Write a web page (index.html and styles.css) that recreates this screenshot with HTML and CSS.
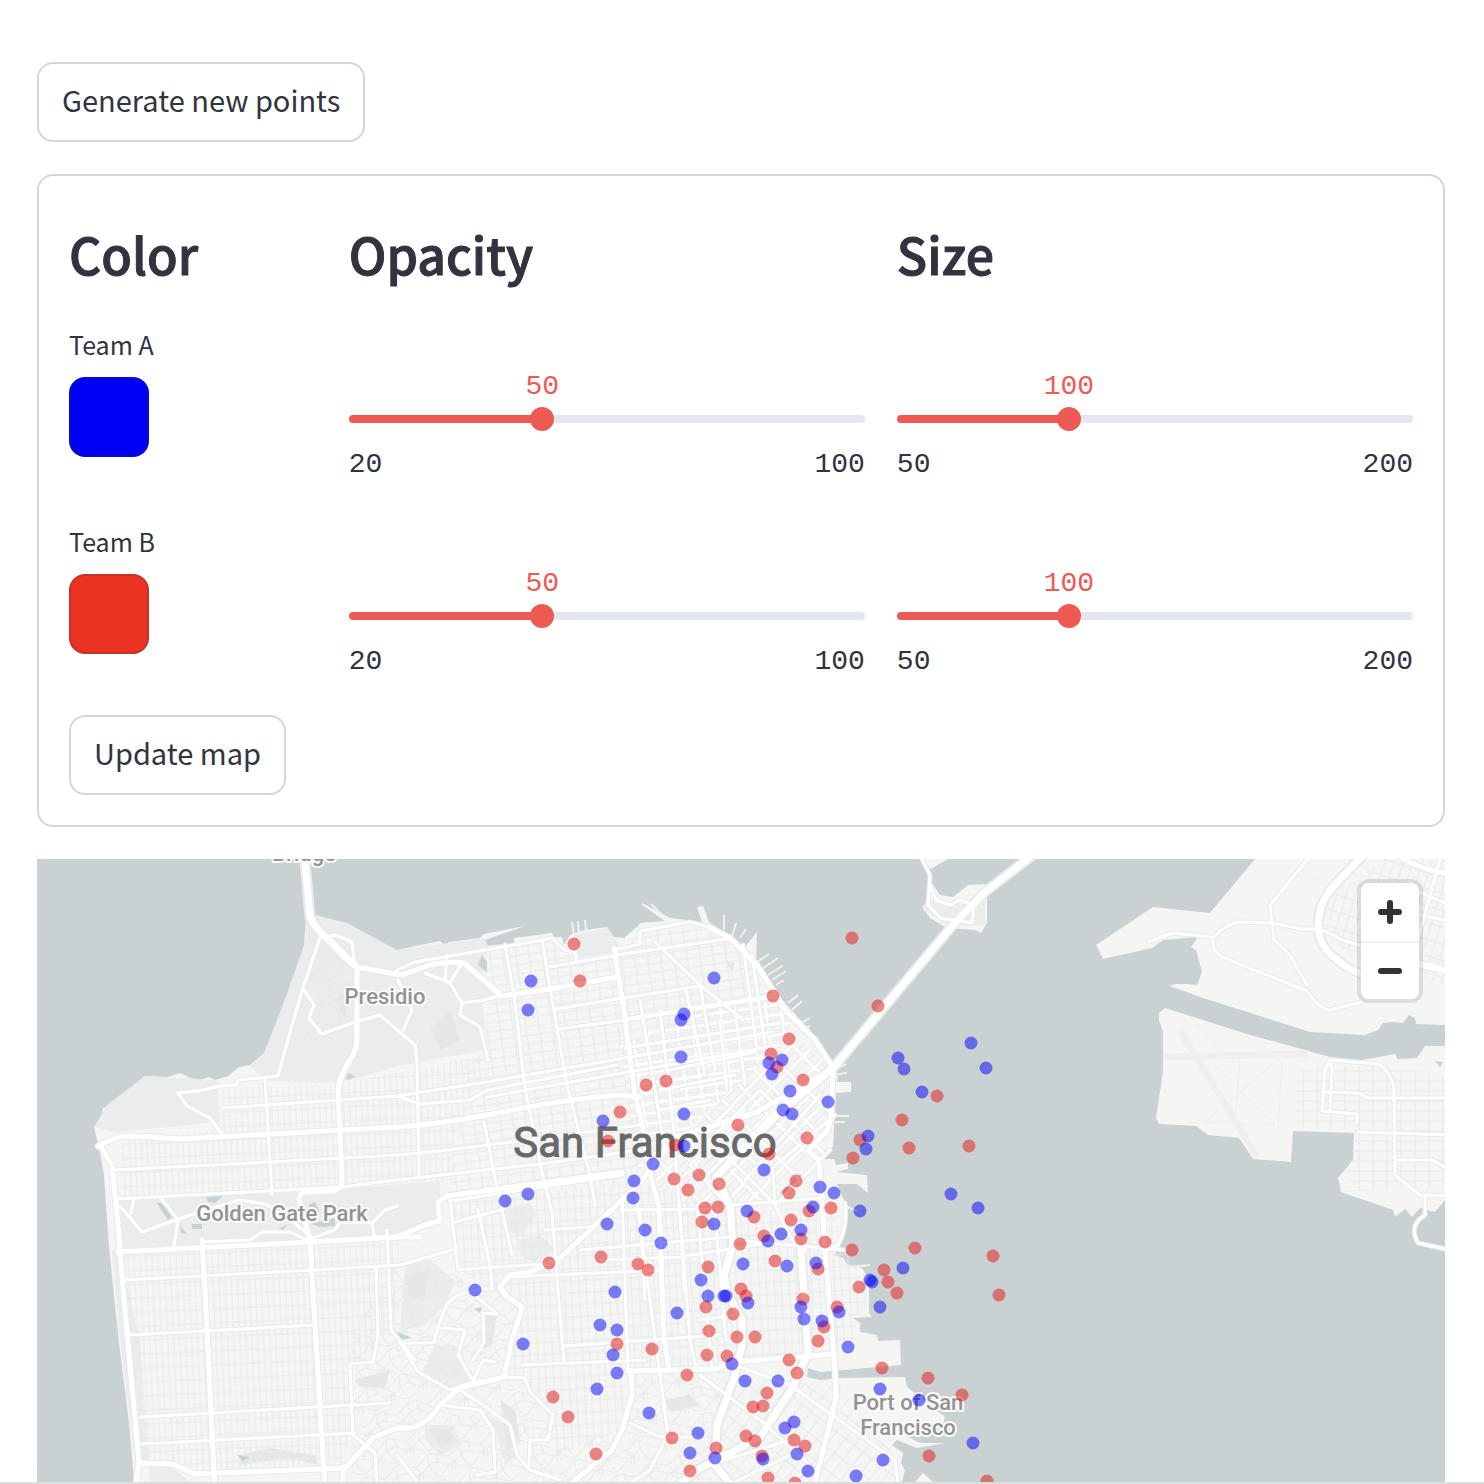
FILE: index.html
```html
<!DOCTYPE html>
<html lang="en">
<head>
<meta charset="utf-8">
<meta name="viewport" content="width=device-width, initial-scale=1">
<title>Team map</title>
<link rel="stylesheet" href="styles.css">
</head>
<body>
<main class="page">
  <button class="btn" type="button">Generate new points</button>

  <form class="panel">
    <div class="columns">
      <h3>Color</h3>
      <h3>Opacity</h3>
      <h3>Size</h3>
    </div>
    <div class="columns team">
      <div class="picker">
        <label for="color-a">Team A</label>
        <input id="color-a" type="color" value="#0000f5">
      </div>
      <div class="slider" style="--pos:37.5%">
        <output for="opacity-a">50</output>
        <div class="track"><input id="opacity-a" type="range" min="20" max="100" value="50" aria-label="Team A opacity"></div>
        <div class="limits"><span>20</span><span>100</span></div>
      </div>
      <div class="slider" style="--pos:33.33%">
        <output for="size-a">100</output>
        <div class="track"><input id="size-a" type="range" min="50" max="200" value="100" aria-label="Team A size"></div>
        <div class="limits"><span>50</span><span>200</span></div>
      </div>
    </div>
    <div class="columns team">
      <div class="picker">
        <label for="color-b">Team B</label>
        <input id="color-b" type="color" value="#ea3323">
      </div>
      <div class="slider" style="--pos:37.5%">
        <output for="opacity-b">50</output>
        <div class="track"><input id="opacity-b" type="range" min="20" max="100" value="50" aria-label="Team B opacity"></div>
        <div class="limits"><span>20</span><span>100</span></div>
      </div>
      <div class="slider" style="--pos:33.33%">
        <output for="size-b">100</output>
        <div class="track"><input id="size-b" type="range" min="50" max="200" value="100" aria-label="Team B size"></div>
        <div class="limits"><span>50</span><span>200</span></div>
      </div>
    </div>
    <button class="btn" type="button">Update map</button>
  </form>

  <section class="map" aria-label="Map of San Francisco">
    <svg class="canvas" viewBox="37 859 1408 623" preserveAspectRatio="xMinYMin slice">
      <defs>
        <pattern id="west" class="grid" width="6" height="14" patternUnits="userSpaceOnUse" patternTransform="rotate(-2.5)"><path d="M0 1H6M1 0V14"/></pattern>
        <pattern id="north" class="grid" width="13" height="9" patternUnits="userSpaceOnUse" patternTransform="rotate(-8)"><path d="M0 1H13M1 0V9"/></pattern>
        <pattern id="core" class="grid" width="15" height="10" patternUnits="userSpaceOnUse" patternTransform="rotate(-8)"><path class="outline" d="M0 3H15M3 0V10"/><path class="lit" d="M0 3H15M3 0V10"/><path d="M3 8H15"/></pattern>
        <pattern id="mission" class="grid" width="15" height="12" patternUnits="userSpaceOnUse" patternTransform="rotate(-3)"><path d="M0 1H15M1 0V12M8 0V12"/></pattern>
        <pattern id="soma" class="grid" width="16" height="22" patternUnits="userSpaceOnUse" patternTransform="rotate(45)"><path class="outline" d="M0 3H16M3 0V22"/><path class="lit" d="M0 3H16M3 0V22"/><path d="M10 4V22"/></pattern>
        <pattern id="bay" class="grid" width="11" height="18" patternUnits="userSpaceOnUse" patternTransform="rotate(38)"><path d="M0 1H11M1 0V18"/></pattern>
        <pattern id="hills" class="grid" width="34" height="28" patternUnits="userSpaceOnUse" patternTransform="rotate(-20)"><path d="M0 5Q9-3 17 5T34 5M0 14Q9 7 17 14T34 14M0 22Q9 30 17 22T34 22M6 3Q1 12 8 24M23 8Q30 14 24 23M14 2V13M30 14L28 24"/></pattern>
        <pattern id="oak" class="grid" width="9" height="16" patternUnits="userSpaceOnUse" patternTransform="rotate(17)"><path d="M0 1H9M1 0V16"/></pattern>
        <pattern id="alameda" class="grid" width="14" height="10" patternUnits="userSpaceOnUse"><path d="M0 1H14M1 0V10"/></pattern>
        <g id="wide">
          <path d="M304 850L310 917Q316 930 329 940Q345 957 357 967"/>
          <path d="M1034 854L985 892L953 925L833 1068L780 1112L716 1177L730 1205L733 1245L724 1275L727 1292L742 1320L742 1345L735 1375L717 1425L715 1465L735 1490"/>
          <path d="M1368 850L1332 888Q1318 905 1318 928Q1320 948 1335 958Q1350 972 1370 976"/>
          <path d="M801 1250L808 1353L793 1387L760 1437L730 1453L697 1470L672 1490"/>
        </g>
        <g id="main">
          <path d="M357 967L402 975L430 965Q447 961 464 963L502 996L550 989L617 977"/>
          <path d="M709 927L730 938L757 965L785 1010L815 1040L833 1068L831 1115Q829 1132 822 1136L808 1150L819 1161L825 1250L835 1370L836 1397L830 1423L813 1490"/>
          <path d="M614 948L624 1012L635 1095L643 1128L649 1170L659 1207L664 1337L669 1370"/>
          <path d="M357 967V1040Q356 1052 350 1060Q340 1075 338 1090L342 1180Q342 1189 332 1191L308 1192Q298 1193 299 1200L310 1240L325 1490"/>
          <path d="M100 1145L112 1165L118 1225L124 1300L139 1462L135 1490"/>
          <path d="M98 1146L121 1136Q150 1136 180 1139L397 1127Q440 1124 487 1115Q560 1100 617 1095L640 1097"/>
          <path d="M118 1252L310 1242L397 1237L420 1237"/>
          <path d="M834 1068L757 1112L674 1138L640 1183L622 1200L560 1258L530 1272L510 1275L500 1287L506 1296L522 1307L512 1340L504 1377L460 1388L440 1405Q427 1425 410 1428L397 1428L374 1437L345 1468L195 1474L172 1464L139 1463"/>
          <path d="M628 1371L715 1369L734 1362L835 1354"/>
          <path d="M631 1371L632 1395L622 1430L612 1450L573 1482"/>
          <path d="M1393 850Q1410 868 1450 874M1420 965L1450 972"/>
          <path d="M202 1240L205 1290L215 1490M344 1466L342 1490"/>
          <path d="M397 1237L425 1225L440 1221L438 1203L447 1196L622 1172"/>
        </g>
        <g id="street">
          <path d="M450 1201L622 1175M617 955L727 939M397 970L415 962L445 957L543 940L552 938L564 950L575 952L577 963M614 950L640 944L640 931L690 922L709 927M624 1019L775 995"/>
          <path d="M505 945L514 995L525 1088L542 1172L552 1213L559 1303L564 1363M542 940L550 988L567 1085L590 1175L595 1205"/>
          <path d="M622 1195L628 1370M636 1195L668 1435L650 1470L620 1490M620 1210L708 1209L715 1214"/>
          <path d="M550 967L617 955M556 1009L617 999L700 986M559 1029L625 1020L775 997M655 942L700 985L743 1020"/>
          <path d="M223 1108L397 1096L420 1104L470 1100L488 1090L617 1065M397 1096L487 1082L625 1058L772 1032M487 1097L640 1070L780 1045M625 1048L780 1023"/>
          <path d="M113 1170L270 1162L397 1155L440 1151L545 1138L640 1125M116 1199L342 1187L397 1180L540 1164L640 1150"/>
          <path d="M265 1080L272 1195M417 1062L419 1175M484 1122L495 1178L512 1255"/>
          <path d="M125 1280L315 1270L400 1265L452 1250M130 1335L315 1325M140 1417L390 1403M142 1444L355 1433M387 1230L391 1330L415 1360M376 1268L378 1335L373 1362L350 1364L353 1435L375 1453L377 1482"/>
          <path d="M223 1135L210 1118L187 1106L178 1093L198 1091L220 1086L237 1085L238 1080L278 1076L292 1025L303 988L320 938L335 935L352 942L354 962M303 988L314 1005L309 1018L322 1034L355 1022L380 1015L397 1030L415 1045L417 1062"/>
          <path d="M398 980L412 1010L403 1030M425 973L450 983L462 1003L460 1015L480 1027L488 1060M462 1003L484 1000L502 995M450 983L462 963M445 980L447 955"/>
          <path d="M120 1206L142 1232L190 1215L240 1200L265 1204L290 1220L310 1235M160 1197L178 1220L174 1245M202 1242L250 1240L262 1232L290 1232L307 1240L335 1230L340 1222L372 1223L385 1210L397 1206M372 1223L374 1235M134 1198L131 1213"/>
          <path d="M450 1200L458 1270L480 1268L560 1263M478 1210L490 1265L492 1290M455 1222L500 1210M545 1230L590 1227"/>
          <path d="M510 1277L660 1270M580 1250L730 1237L733 1240M600 1260L680 1257L760 1244M564 1346L720 1335M522 1365L645 1360"/>
          <path d="M674 1140L690 1340L696 1368M697 1205L712 1368M715 1215L726 1340M640 1210L645 1300M680 1210L684 1290"/>
          <path d="M491 1288Q460 1290 448 1303Q437 1325 434 1343L400 1343M397 1337L418 1372L450 1390L480 1380M460 1390L490 1410L510 1425L517 1455L530 1470L560 1480M439 1328L465 1330L458 1355L473 1381L483 1360L495 1362M477 1297L497 1314L483 1313L484 1342L473 1360"/>
          <path d="M505 1377L525 1378L530 1392L553 1415L548 1440L530 1440L529 1465M397 1455L417 1482M440 1405L480 1410L493 1430L495 1472L477 1475"/>
          <path d="M700 1375L760 1420L815 1470M790 1385L895 1460L898 1482M733 1240L845 1250M735 1365L790 1385M715 1463L790 1440M735 1482L790 1455M630 1423L660 1437L700 1437M700 1320L735 1315"/>
          <path d="M730 1205L825 1198M770 1170L835 1115M700 1150L760 1090M720 1170L795 1090M745 1180L820 1095M690 1165L745 1110M775 1205L830 1150M690 1165L733 1210M712 1140L775 1205M735 1115L800 1180M760 1090L825 1155M780 1065L833 1115"/>
          <path d="M686 990L705 1075M700 985L715 1070M720 1020L727 1090M743 945L757 1050M752 955L765 1045M735 1010L745 1085M660 1010L675 1140M640 1000L665 1150M780 1055L700 1140M773 1170L775 1205L792 1240L805 1250M845 1203Q848 1228 838 1245L825 1252M660 1090L735 1075M660 1110L710 1100M670 1070L755 1052"/>
          <path d="M1149 942L1172 933L1212 937L1214 950L1222 957L1307 991Q1320 1010 1330 1010L1362 1002M1214 937Q1225 925 1238 922L1272 923L1302 929L1320 929L1345 941L1450 970M1308 859L1270 905L1274 940L1290 955L1307 985M1440 859L1415 950M1405 886L1445 903M1420 915L1445 920"/>
          <path d="M1330 1060L1325 1070L1322 1111L1357 1114L1357 1123M1330 1060L1332 1070L1330 1110M1330 1060L1378 1064Q1392 1072 1394 1090L1395 1175L1420 1195L1450 1196M1322 1092L1358 1093L1368 1098L1450 1098M1358 1132L1450 1135M1396 1160L1432 1160L1450 1170M1425 1195V1215Q1408 1225 1418 1243L1450 1250"/>
          <path d="M920 855L930 875L928 905L940 918L972 923L974 905L960 900L950 905L936 900L930 885"/>
        </g>
      </defs>

      <rect class="water" x="37" y="859" width="1408" height="800"/>

      <g class="land">
        <path d="M135 1490L129 1423L119 1343L109 1247L104 1175L99 1148L94 1127L100 1122L103 1108L112 1105L115 1101L122 1101L136 1085L145 1076L168 1077L180 1073L197 1081L209 1077L215 1080L228 1076L239 1067L250 1065L264 1053L272 1038L284 1002L294 982L304 945L306 920L315 915L324 920L347 923L362 937L397 950L440 941L445 945L449 942L480 938L484 934L525 926L485 940L484 946L514 943L514 938L552 933L554 937L562 937L564 945L570 935L585 930L607 927L614 937L624 938L639 925L640 923L665 921L642 905L642 903L670 918L687 920L702 922L697 907L703 906L709 922L727 935L745 947L757 932L756 962L785 1003L810 1030L833 1065L838 1075L837 1082L851 1082L851 1092L836 1093L833 1147L822 1152L825 1159L834 1159L836 1165L848 1163L848 1169L836 1172L867 1175L868 1193L857 1184L837 1184L845 1203L847 1220L843 1240L835 1255L843 1258L848 1265L862 1268L869 1280L869 1313L872 1317L853 1318L860 1323L860 1332L877 1335L878 1341L900 1340L901 1365L820 1372L808 1368L807 1377L820 1380L840 1378L905 1377L907 1387L945 1417L943 1424L904 1435L920 1443L945 1443L917 1448L897 1440L892 1445L903 1453L901 1463L905 1470L900 1490Z"/>
        <path d="M932 883L940 895L953 897L968 885L987 884L987 923L981 933L975 930L947 928L930 918L922 907L927 902ZM920 859H948L931 869ZM915 1482L923 1473L933 1482Z"/>
        <path d="M1255 859L1210 913L1153 907L1096 945L1103 959L1152 948L1163 940L1198 937L1191 947L1196 950L1202 972L1197 985L1186 984L1176 984L1169 986L1187 992L1197 996L1310 1032L1365 1035L1378 1030L1383 1023L1393 1022L1403 1023L1409 1015L1415 1018L1416 1024L1445 1025V859Z"/>
        <path d="M1165 1008L1159 1013V1020L1163 1032L1163 1072L1156 1118L1159 1124L1196 1126L1208 1135L1239 1138L1253 1159L1291 1162L1293 1131L1354 1133L1353 1160L1338 1178L1341 1192L1393 1210L1395 1217L1405 1209L1412 1217L1420 1208L1435 1212L1445 1200V1046H1425L1417 1058L1398 1059L1395 1054L1362 1060L1330 1057L1247 1034Z"/>
      </g>
      <path class="pier" d="M757 962l12-8M762 969l16-11M768 975l14-9M772 980l14-9M776 985l8-5M788 1003l10-8M792 1010l10-9M801 1023l9-5M806 1028l4-2M724 930V915M732 936l4-13M740 938l6-9M574 935l-2-13M579 933l-1-12M586 930l-1-10M838 1068l8-4M838 1074l9-1M835 1116h14M835 1122h10M843 1205l14 6M850 1267l20-2M651 904l14 14"/>

      <path class="park" d="M264 1081L250 1065L264 1053L284 1002L304 945L306 920L315 915L347 923L397 950L484 938L488 946L482 975L500 995L483 1000L485 1050L397 1066L340 1083Z"/>
      <path class="park" d="M94 1127L107 1105L145 1076L217 1080L220 1122L115 1132ZM117 1200L342 1189L440 1181V1220L400 1235L118 1250ZM120 1340L138 1482H150L140 1340L118 1250H112ZM142 1466L170 1466L190 1482H137Z"/>
      <path class="park" d="M574 935L607 928L619 945L614 952L580 958ZM508 1208L530 1203L536 1215L522 1235L508 1232ZM518 1240L540 1235L555 1250L535 1262L520 1255ZM405 1265L430 1260L455 1280L445 1305L425 1325L400 1330ZM435 1345L455 1345L470 1380L450 1388L420 1377ZM480 1410L505 1425L517 1455L505 1465L495 1430ZM425 1425L455 1425L460 1445L440 1455L425 1440ZM922 907L930 900L960 905L985 890V925L947 926Z"/>
      <path class="shade" d="M335 1000L350 980L345 1020ZM430 1030L450 1010L460 1040L440 1050ZM405 1275L430 1270L425 1295L410 1300ZM485 1315L498 1310L492 1345L480 1350ZM500 1400L515 1410L520 1440L508 1450ZM430 1430L450 1430L455 1440L440 1448ZM240 1455L270 1448L315 1455L318 1465L290 1458L240 1465ZM355 1380L390 1370L385 1388L360 1387ZM725 960L735 963L732 972ZM665 1400L690 1395L700 1405L670 1412Z"/>

      <g class="blocks">
        <path fill="url(#west)" d="M122 1142L220 1129L223 1088L340 1085L345 1083L480 1056L447 1181L120 1198Z"/>
        <path fill="url(#west)" d="M122 1254L400 1240L395 1330L352 1370L353 1430L340 1468L200 1474L142 1462Z"/>
        <path fill="url(#north)" d="M485 1050L487 1000L470 965L490 948L548 940L565 955L615 950L640 932L695 926L730 942L757 968L775 1000L625 1035L640 1185L447 1200L470 1065Z"/>
        <path fill="url(#core)" d="M700 1010L778 996L792 1025L755 1070L640 1170L620 1045Z"/>
        <path fill="url(#mission)" d="M450 1204L640 1180L740 1215L835 1200L840 1245L868 1280L866 1310L850 1318L860 1335L830 1355L735 1362L640 1369L625 1430L555 1455L545 1400L508 1372L522 1308L460 1270Z"/>
        <path fill="url(#soma)" d="M640 1180L757 1067L790 1030L830 1070L832 1130L770 1200L715 1212Z"/>
        <path fill="url(#hills)" d="M350 1335L400 1260L455 1275L500 1295L520 1310L505 1370L548 1400L550 1450L625 1430L635 1375L735 1370L712 1430V1482H350L355 1380Z"/>
        <path fill="url(#bay)" d="M737 1372L795 1385L835 1382L890 1450L898 1482H735L718 1440Z"/>
        <path fill="url(#hills)" d="M310 930L345 935L345 1015L330 1040L305 1040L318 1000L305 985Z"/>
        <path fill="url(#oak)" d="M1385 859H1445V985L1345 950L1322 935L1330 900Z"/>
        <path fill="url(#alameda)" d="M1295 1068L1330 1066L1380 1066L1445 1075V1190L1420 1188L1345 1192L1355 1130L1295 1128Z"/>
      </g>
      <path class="runway" d="M1164 1057L1308 1054M1180 1030L1258 1158"/>
      <path class="lane" d="M1195 1022L1222 1050M1240 1060L1236 1115M1280 1058L1205 1122L1275 1125L1215 1065M1282 1060L1278 1130M1300 875L1322 878"/>
      <path class="pond" d="M206 1197L223 1196L215 1203L208 1202ZM156 1202L163 1204L172 1217L168 1220ZM180 1226L187 1234L181 1233ZM192 1224H202V1229H192ZM278 1229L288 1224L283 1230ZM308 1205L315 1202L320 1212L312 1211ZM311 1224L335 1218V1226L320 1227ZM237 1455L250 1457L243 1461ZM482 955L487 962V973L478 965ZM348 1073L356 1077L346 1080ZM397 1332L412 1338L400 1340ZM474 1309L482 1307L480 1313ZM780 1192L800 1174L803 1177L782 1199ZM1435 1061L1443 1062L1440 1067Z"/>

      <g class="casing">
        <use href="#street" class="w-street"/><use href="#main" class="w-main"/><use href="#wide" class="w-wide"/>
      </g>
      <g class="road">
        <use href="#street" class="w-street"/><use href="#main" class="w-main"/><use href="#wide" class="w-wide"/>
      </g>

      <g class="place">
        <text x="304" y="861">Bridge</text>
        <text x="385" y="1004">Presidio</text>
        <text x="282" y="1221">Golden Gate Park</text>
        <text x="908" y="1410">Port of San</text>
        <text x="908" y="1435">Francisco</text>
      </g>
      <text class="city" x="645" y="1157">San Francisco</text>
      <g id="points"></g>
    </svg>
    <div class="zoom">
      <button type="button" aria-label="Zoom in"><svg viewBox="0 0 24 24"><path d="M12 3V21M3 12H21"/></svg></button>
      <button type="button" aria-label="Zoom out"><svg viewBox="0 0 24 24"><path d="M3 12H21"/></svg></button>
    </div>
  </section>
</main>
<script src="points.js"></script>
</body>
</html>
```
FILE: styles.css
```css
* { box-sizing: border-box; }

body {
  margin: 0;
  background: #fff;
  color: #31333f;
  font-family: "Noto Sans CJK JP", "Noto Sans", sans-serif;
}

.page {
  display: flex;
  flex-direction: column;
  align-items: flex-start;
  gap: 32px;
  height: 100vh;
  min-height: 1200px;
  padding: 62px 39px 0 37px;
  border-bottom: 2px solid #dcdddd;
}

.btn {
  height: 80px;
  padding: 0 23px 6px;
  border: 2px solid #d6d6d8;
  border-radius: 16px;
  background: #fff;
  color: inherit;
  font: inherit;
  font-size: 29px;
  line-height: 40px;
}

.panel {
  width: 100%;
  padding: 45px 30px 30px;
  border: 2px solid #d6d6d8;
  border-radius: 16px;
}

.columns {
  display: grid;
  grid-template-columns: 12fr 25fr 25fr;
  column-gap: 32px;
}

h3 {
  margin: 0;
  font-size: 50px;
  font-weight: 500;
  line-height: 64px;
  -webkit-text-stroke: 1px #31333f;
}

.team { margin-top: 45px; }
.team + .team { margin-top: 46px; }
.panel .btn { margin-top: 37px; }

.picker {
  display: flex;
  flex-direction: column;
  gap: 19px;
}

.picker label {
  font-size: 25px;
  line-height: 28px;
}

input[type="color"] {
  width: 80px;
  height: 80px;
  padding: 0;
  border: 0;
  background: none;
}
input[type="color"]::-webkit-color-swatch-wrapper { padding: 0; }
input[type="color"]::-webkit-color-swatch {
  border: 2px solid rgba(49, 51, 63, 0.2);
  border-radius: 16px;
}

.slider {
  padding-top: 41px;
  font-family: "Liberation Mono", monospace;
  font-size: 28px;
  line-height: 32px;
}

.slider output {
  display: block;
  width: 80px;
  margin-left: calc(var(--pos) - 40px);
  color: #ec5a53;
  text-align: center;
}

.track {
  display: flex;
  align-items: center;
  height: 8px;
  margin: 12px 0 26px;
  border-radius: 4px;
  background: linear-gradient(90deg, #ec5a53 var(--pos), #e4e7ef var(--pos));
}

input[type="range"] {
  flex: 1;
  height: 24px;
  margin: 0 -12px;
  background: none;
  appearance: none;
}
input[type="range"]::-webkit-slider-thumb {
  width: 24px;
  height: 24px;
  border-radius: 50%;
  background: #ec5a53;
  appearance: none;
}

.limits {
  display: flex;
  justify-content: space-between;
}

.map {
  position: relative;
  flex: 1;
  width: 100%;
  min-height: 0;
  overflow: hidden;
}

.canvas {
  display: block;
  width: 100%;
  height: 100%;
}

.water, .pond { fill: #cad1d3; }
.land { fill: #f5f5f4; }
.park { fill: #ebecec; }
.shade { fill: #e5e7e7; }
.pier { stroke: #f0f1f0; stroke-width: 2; }
.grid path { fill: none; stroke: #e5eae8; stroke-width: 1; }
.grid .outline { stroke-width: 5; }
.grid .lit { stroke: #fff; stroke-width: 3; }
.runway { stroke: #efefef; stroke-width: 7; }
.lane { fill: none; stroke: #eeefee; stroke-width: 1; }

.casing, .road {
  fill: none;
  stroke-linejoin: round;
  stroke-linecap: round;
}
.casing { stroke: #e7ebe9; }
.road { stroke: #fff; }
.road .w-street { stroke-width: 3px; }
.road .w-main { stroke-width: 5px; }
.road .w-wide { stroke-width: 7px; }
.casing .w-street { stroke-width: 5px; }
.casing .w-main { stroke-width: 7px; }
.casing .w-wide { stroke-width: 11px; }

.place, .city {
  font-family: Roboto, sans-serif;
  text-anchor: middle;
  paint-order: stroke;
  stroke-linejoin: round;
}
.place {
  fill: #939393;
  stroke: #fafafa;
  stroke-width: 4px;
  font-size: 22px;
  font-weight: 500;
}
.city {
  fill: #696969;
  stroke: #696969;
  stroke-width: 1px;
  font-size: 42px;
}

.team-a { fill: rgba(0, 0, 245, 0.5); }
.team-b { fill: rgba(226, 25, 25, 0.52); }

.zoom {
  position: absolute;
  top: 20px;
  right: 22px;
  border: 4px solid rgba(0, 0, 0, 0.1);
  border-radius: 12px;
}
.zoom button {
  display: flex;
  align-items: center;
  justify-content: center;
  width: 58px;
  height: 56px;
  padding: 0;
  border: 0;
  border-radius: 0 0 8px 8px;
  background: #fff;
}
.zoom button:first-child {
  height: 60px;
  border-bottom: 2px solid #eef0f5;
  border-radius: 8px 8px 0 0;
}
.zoom svg {
  width: 24px;
  height: 24px;
  fill: none;
  stroke: #333;
  stroke-width: 6;
  stroke-linecap: round;
}
```
FILE: points.js
```js
const teams = {
  "team-b": "574,944 580,981 852,938 878,1006 773,996 789,1039 771,1054 777,1067 803,1080 646,1085 666,1081 620,1112 608,1141 675,1145 738,1125 807,1138 769,1154 937,1096 902,1120 909,1148 969,1146 860,1140 853,1158 674,1179 699,1175 688,1190 719,1184 705,1208 718,1207 702,1222 754,1217 796,1181 789,1193 809,1211 831,1208 791,1220 740,1244 764,1236 801,1239 825,1242 852,1250 915,1248 993,1256 999,1295 775,1261 818,1269 884,1270 888,1282 897,1293 859,1287 549,1263 601,1257 638,1264 648,1270 708,1267 741,1289 746,1296 706,1307 733,1314 709,1331 737,1337 755,1337 617,1344 652,1349 707,1355 727,1356 803,1299 837,1307 824,1327 818,1341 789,1360 797,1373 687,1375 882,1368 928,1378 962,1395 553,1397 568,1417 596,1454 672,1438 716,1448 690,1471 767,1393 753,1407 763,1406 746,1436 755,1441 794,1440 805,1446 762,1456 768,1478 795,1483 929,1456 987,1481",
  "team-a": "531,981 528,1010 714,978 684,1014 681,1020 681,1057 684,1114 603,1121 684,1146 653,1164 769,1063 782,1060 772,1074 790,1091 828,1102 783,1110 792,1114 898,1058 904,1069 971,1043 986,1068 922,1092 868,1136 866,1149 764,1170 820,1187 834,1193 860,1211 951,1194 978,1208 505,1201 528,1194 634,1181 633,1198 607,1224 645,1230 661,1243 714,1224 747,1211 781,1234 768,1241 801,1230 813,1207 743,1264 787,1266 816,1263 903,1268 870,1280 872,1282 880,1307 475,1290 615,1292 701,1280 708,1296 724,1296 726,1296 748,1303 677,1313 600,1325 617,1330 523,1344 613,1355 617,1373 597,1389 801,1307 804,1319 822,1321 839,1312 848,1347 732,1364 745,1381 778,1381 880,1389 919,1400 649,1413 698,1433 690,1453 715,1458 794,1422 785,1428 797,1454 763,1459 808,1471 856,1476 883,1460 973,1443"
};

const layer = document.getElementById("points");
for (const [team, list] of Object.entries(teams)) {
  for (const pair of list.split(" ")) {
    const [x, y] = pair.split(",");
    const dot = document.createElementNS("http://www.w3.org/2000/svg", "circle");
    dot.setAttribute("class", team);
    dot.setAttribute("cx", x);
    dot.setAttribute("cy", y);
    dot.setAttribute("r", 6.5);
    layer.append(dot);
  }
}
```
